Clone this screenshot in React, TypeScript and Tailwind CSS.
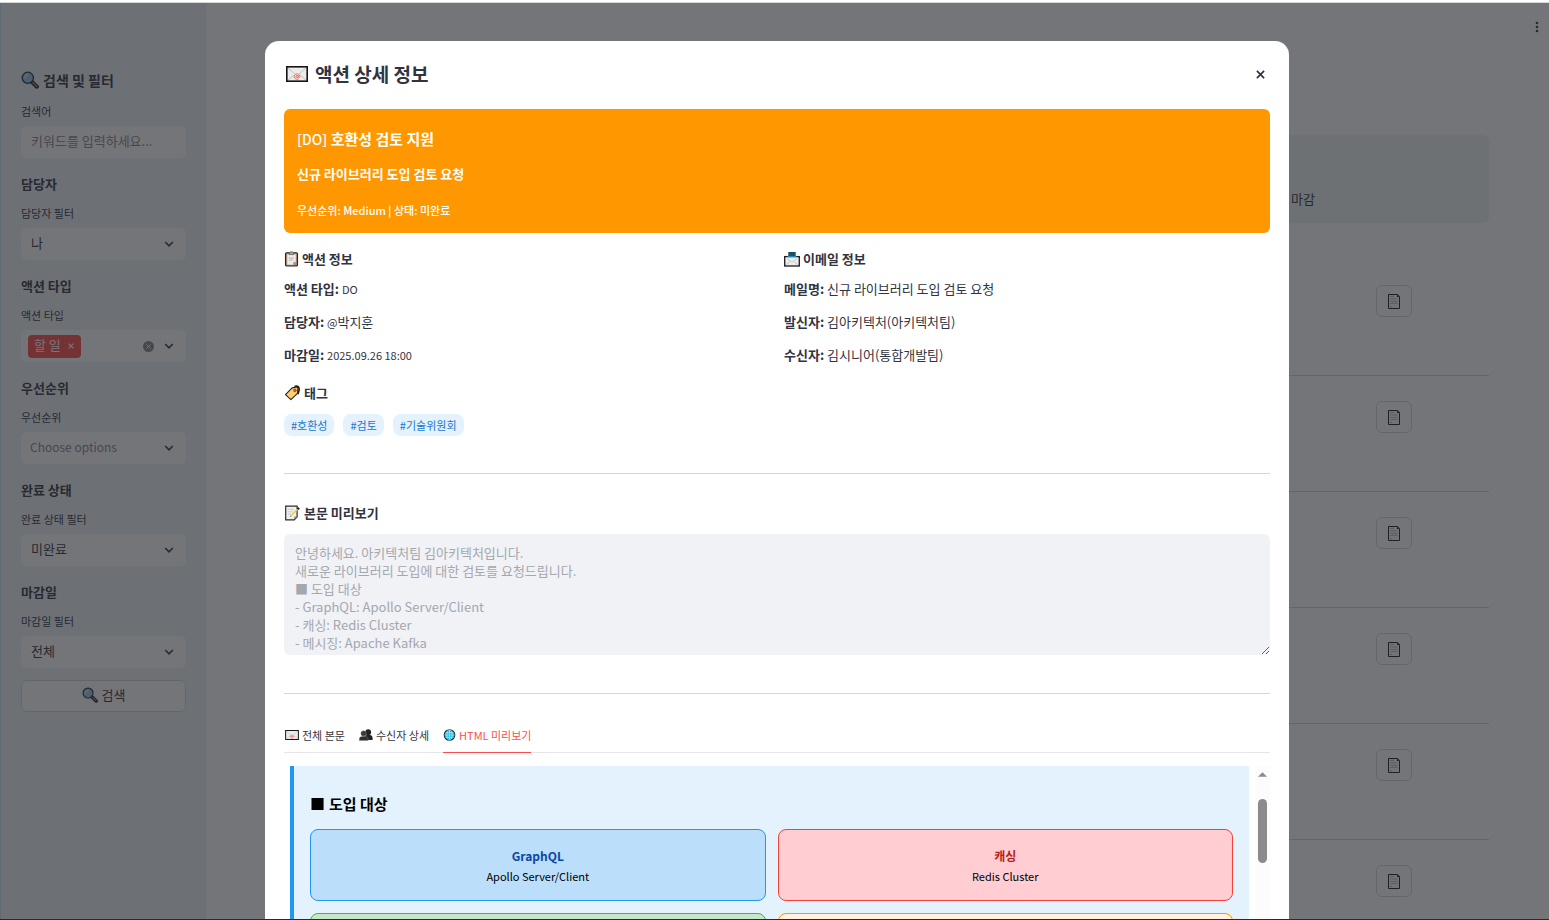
import React from "react";
import type { ReactNode } from "react";

type IconProps = { className?: string };

const SearchIcon = ({ className }: IconProps) => (
  <svg viewBox="0 0 18 18" className={className} aria-hidden="true">
    <path d="M10.5 10.5l5.4 5.2" stroke="#1d2024" strokeWidth="4" strokeLinecap="round" />
    <path d="M11.8 11.6l4 3.9" stroke="#7b8288" strokeWidth="1.6" strokeLinecap="round" />
    <circle cx="6.8" cy="6.8" r="5.6" fill="#8fc6ea" stroke="#26292e" strokeWidth="1.3" />
    <path d="M3.8 7.2a3.4 3.4 0 0 1 3.4-3.4" stroke="#d6efff" strokeWidth="1.3" fill="none" />
  </svg>
);

const MailIcon = ({ className }: IconProps) => (
  <svg viewBox="0 0 22 16" className={className} aria-hidden="true">
    <rect x="0.8" y="0.8" width="20.4" height="14.4" fill="#ececec" stroke="#151515" strokeWidth="1.6" />
    <path d="M2 2l7 6M20 2l-7 6M2 14l6-5M20 14l-6-5" stroke="#b5b5b5" strokeWidth="0.8" fill="none" />
    <path d="M12.9 12.7a2.8 2.8 0 1 1 .9-2.2c0 1.4-1.5 1.5-1.5.2V9.4" stroke="#e8664e" strokeWidth="0.9" fill="none" />
    <circle cx="11" cy="10.5" r="1.2" stroke="#e8664e" strokeWidth="0.8" fill="#f8c5b9" />
  </svg>
);

const ClipboardIcon = ({ className }: IconProps) => (
  <svg viewBox="0 0 14 16" className={className} aria-hidden="true">
    <rect x="1" y="1.8" width="12" height="13.2" rx="1" fill="#a98a72" stroke="#2b2521" strokeWidth="1.1" />
    <path d="M2.7 3.2h8.6V11l-2.6 2.8h-6z" fill="#ececec" />
    <path d="M11.3 11H8.7v2.8z" fill="#9b9b9b" />
    <path d="M4.4 7h5M4.4 9h4" stroke="#a5a5a5" strokeWidth="0.8" />
    <path d="M4.6 3.6V2L6 .8h2L9.4 2v1.6z" fill="#9da1a5" stroke="#4a4a4a" strokeWidth="0.6" />
  </svg>
);

const OutboxIcon = ({ className }: IconProps) => (
  <svg viewBox="0 0 16 16" className={className} aria-hidden="true">
    <path d="M4.4 6.5V1h7.2v5.5z" fill="#101c24" />
    <path d="M6 1v4M8 1v4M10 1v4" stroke="#1ea7d6" strokeWidth="0.8" />
    <rect x="0.7" y="5.6" width="14.6" height="9.4" fill="#ededed" stroke="#1b1b1b" strokeWidth="1.3" />
    <path d="M2 13.8l4.4-3.6M14 13.8l-4.4-3.6M3 7.6l5 3.6 5-3.6" stroke="#c2c2c2" strokeWidth="0.8" fill="none" />
    <path d="M3.5 5.4h9" stroke="#1ea7d6" strokeWidth="0.9" />
  </svg>
);

const TagIcon = ({ className }: IconProps) => (
  <svg viewBox="0 0 16 16" className={className} aria-hidden="true">
    <path d="M10 1.6c3.2-1.4 5 .6 4.5 3.6-.2 1.6-.7 3-1.4 4" stroke="#2c1a12" strokeWidth="1.7" fill="none" />
    <path d="M1 9.7L7.6 2.9l4.9-.9 1 1.3-.5 5-6.6 6.3z" fill="#fbcf72" stroke="#2a211a" strokeWidth="1.1" strokeLinejoin="round" />
    <circle cx="10.4" cy="5.4" r="1.4" fill="#d9661f" stroke="#7a2c10" strokeWidth="0.6" />
  </svg>
);

const MemoIcon = ({ className }: IconProps) => (
  <svg viewBox="0 0 16 16" className={className} aria-hidden="true">
    <path d="M1.2 1.2h11.4v10.6l-2.8 3H1.2z" fill="#f0f0f0" stroke="#2b2b2b" strokeWidth="1.2" />
    <path d="M12.6 11.4H9.6v3.4z" fill="#8d8d8d" />
    <path d="M3.2 4.4h6M3.2 6.8h5M3.2 9.2h3.4" stroke="#c4c4c4" strokeWidth="0.9" />
    <path d="M6.2 11L13.2 4" stroke="#f6c851" strokeWidth="1.7" />
    <path d="M12.8 2.8l2 1.4" stroke="#22201e" strokeWidth="1.9" />
    <path d="M5.2 12.2l.6-1.8 1.2 1.2z" fill="#a08a5d" />
  </svg>
);

const PeopleIcon = ({ className }: IconProps) => (
  <svg viewBox="0 0 14 12" className={className} aria-hidden="true">
    <circle cx="9.2" cy="3.2" r="2.9" fill="#222" />
    <path d="M5.6 11V8.4c0-1.7 1.5-2.6 3.6-2.6 2.8 0 4.4 1.2 4.4 3.2v2z" fill="#222" />
    <circle cx="4.6" cy="4.4" r="2.7" fill="#3a3a3a" stroke="#8a8a8a" strokeWidth="0.4" />
    <path d="M.3 11.6V9.8c0-1.8 1.7-2.6 4.2-2.6s4.6.8 4.6 2.6v1.8z" fill="#2d2d2d" stroke="#8a8a8a" strokeWidth="0.4" />
  </svg>
);

const GlobeIcon = ({ className }: IconProps) => (
  <svg viewBox="0 0 12 12" className={className} aria-hidden="true">
    <circle cx="6" cy="6" r="5.3" fill="#27bdea" stroke="#12333f" strokeWidth="1.1" />
    <path d="M6 1v10M1 6h10M2 3.6h8M2 8.4h8" stroke="#b5ecfb" strokeWidth="0.6" />
    <ellipse cx="6" cy="6" rx="2.6" ry="5" stroke="#b5ecfb" strokeWidth="0.6" fill="none" />
  </svg>
);

const PageIcon = ({ className }: IconProps) => (
  <svg viewBox="0 0 12 15" className={className} aria-hidden="true">
    <path d="M.5.5h9l2 2v12H.5z" fill="#fafafa" stroke="#1a1a1a" strokeWidth="1" />
    <path d="M9 .7v2.4h2.4z" fill="#111" />
    <path d="M2 2.5h4M2.4 5h7M2.4 7.5h7M2.4 9.5h7M2 12.5h2" stroke="#bdbdbd" strokeWidth="1" />
  </svg>
);

const Chevron = ({ className }: IconProps) => (
  <svg viewBox="0 0 10 6" className={className} fill="none" stroke="currentColor" strokeWidth="1.6" aria-hidden="true">
    <path d="M1.2 1l3.8 3.8L8.8 1" />
  </svg>
);

const Cross = ({ className }: IconProps) => (
  <svg viewBox="0 0 10 10" className={className} fill="none" stroke="currentColor" strokeWidth="1.9" aria-hidden="true">
    <path d="M1 1l8 8M9 1L1 9" />
  </svg>
);

const Latin = ({ children }: { children: ReactNode }) => <span className="text-[11px]">{children}</span>;

function FilterGroup({ id, title, label, children }: { id: string; title: string; label: string; children: ReactNode }) {
  return (
    <section className="mt-4">
      <h3 className="text-[13px] leading-5 font-bold">{title}</h3>
      <label htmlFor={id} className="mt-[9px] mb-[5px] block text-[11px] leading-5 text-[#31333f]">
        {label}
      </label>
      {children}
    </section>
  );
}

function SelectBox({ id, value, muted }: { id: string; value: string; muted?: boolean }) {
  return (
    <div className="relative">
      <select
        id={id}
        className={
          muted
            ? "h-8 w-full appearance-none rounded-md bg-white pr-8 pb-[3px] pl-[9px] text-xs text-[#85868c]"
            : "h-8 w-full appearance-none rounded-md bg-white pr-8 pb-[3px] pl-[10px] text-[13px]"
        }
      >
        <option>{value}</option>
      </select>
      <Chevron className="pointer-events-none absolute top-[13px] right-3 h-1.5 w-2.5" />
    </div>
  );
}

function Sidebar() {
  return (
    <aside className="w-[205px] shrink-0 bg-[#ebf5fa] px-5 pt-[65px]">
      <h2 className="flex items-center gap-1 text-sm leading-6 font-bold">
        <SearchIcon className="h-[18px] w-[18px]" />
        검색 및 필터
      </h2>
      <label htmlFor="keyword" className="mt-[9px] mb-[5px] block text-[11px] leading-5">
        검색어
      </label>
      <input
        id="keyword"
        placeholder="키워드를 입력하세요..."
        className="block h-8 w-full rounded-md bg-white px-[10px] pb-[3px] text-[13px] placeholder:text-[#85868c]"
      />
      <FilterGroup id="owner" title="담당자" label="담당자 필터">
        <SelectBox id="owner" value="나" />
      </FilterGroup>
      <FilterGroup id="type" title="액션 타입" label="액션 타입">
        <div className="flex h-8 items-center rounded-md bg-white pr-3 pl-[7px]">
          <button id="type" className="flex h-[23px] w-[53px] items-center justify-between rounded-sm bg-[#ff4b4b] pr-[7px] pl-1.5 text-[13px] text-white">
            <span className="pb-[3px]">할 일</span>
            <Cross className="h-1.5 w-1.5" />
          </button>
          <button aria-label="선택 지우기" className="ml-auto flex h-[11px] w-[11px] items-center justify-center rounded-full bg-[#85868c] text-white">
            <Cross className="h-[5px] w-[5px]" />
          </button>
          <Chevron className="ml-2.5 h-1.5 w-2.5" />
        </div>
      </FilterGroup>
      <FilterGroup id="priority" title="우선순위" label="우선순위">
        <SelectBox id="priority" value="Choose options" muted />
      </FilterGroup>
      <FilterGroup id="status" title="완료 상태" label="완료 상태 필터">
        <SelectBox id="status" value="미완료" />
      </FilterGroup>
      <FilterGroup id="due" title="마감일" label="마감일 필터">
        <SelectBox id="due" value="전체" />
      </FilterGroup>
      <button className="mt-3 flex h-8 w-full items-center justify-center gap-1 rounded-md border border-[#d6d6d8] bg-white pb-[3px] text-[13px]">
        <SearchIcon className="h-4 w-4" />
        검색
      </button>
    </aside>
  );
}

function ActionList() {
  return (
    <main className="relative min-w-0 flex-1 bg-white px-[60px] pt-[132px]">
      <button aria-label="메뉴" className="absolute top-[18px] right-[9px] flex h-3 w-1.5 justify-center">
        <svg viewBox="0 0 4 12" className="h-3 w-1" fill="currentColor" aria-hidden="true">
          <circle cx="2" cy="2" r="1.3" />
          <circle cx="2" cy="6" r="1.3" />
          <circle cx="2" cy="10" r="1.3" />
        </svg>
      </button>
      <div className="flex h-[88px] justify-end rounded-md bg-[#ebf5f4] pt-[54px] text-[13px] leading-5">
        <p className="w-[198px]">마감</p>
      </div>
      <ul className="mt-[37px]">
        {[1, 2, 3, 4, 5, 6].map((n) => (
          <li key={n} className="flex h-[116px] items-start justify-end border-b border-[#d6d6d8] pt-[25px] pr-[77px]">
            <button aria-label="상세 보기" className="flex h-8 w-9 items-center justify-center rounded-md border border-[#d6d6d8]">
              <PageIcon className="h-[15px] w-3" />
            </button>
          </li>
        ))}
      </ul>
    </main>
  );
}

function Row({ name, children }: { name: string; children: ReactNode }) {
  return (
    <p>
      <strong className="font-bold">{name}:</strong> {children}
    </p>
  );
}

function SectionTitle({ icon, children }: { icon: ReactNode; children: ReactNode }) {
  return (
    <h3 className="flex items-center gap-[3px] text-[13px] leading-5 font-bold">
      {icon}
      {children}
    </h3>
  );
}

function Tag({ children }: { children: ReactNode }) {
  return <li className="rounded-lg bg-[#e3f2fd] px-[7px] text-[11px] leading-[22px] text-[#1976d2]">{children}</li>;
}

const message = `안녕하세요. 아키텍처팀 김아키텍처입니다.
새로운 라이브러리 도입에 대한 검토를 요청드립니다.
■ 도입 대상
- GraphQL: Apollo Server/Client
- 캐싱: Redis Cluster
- 메시징: Apache Kafka`;

function HtmlPreview() {
  return (
    <div className="mt-[13px] flex h-[320px] overflow-hidden pl-1.5 text-black">
      <div className="h-[400px] flex-1 border-l-4 border-[#2196f3] bg-[#e3f2fd] px-4 pt-[26px]">
        <h4 className="flex gap-1 text-[15px] leading-6 font-bold">
          <span>■</span>도입 대상
        </h4>
        <div className="mt-[13px] grid grid-cols-2 gap-3 text-center text-[11px] leading-5">
          <div className="h-[72px] rounded-lg border border-[#2196f3] bg-[#bbdefb] pt-4">
            <p className="text-xs leading-5 font-bold text-[#0d47a1]">GraphQL</p>
            <p>Apollo Server/Client</p>
          </div>
          <div className="h-[72px] rounded-lg border border-[#f44336] bg-[#ffcdd2] pt-4">
            <p className="text-xs leading-5 font-bold text-[#b71c1c]">캐싱</p>
            <p>Redis Cluster</p>
          </div>
          <div className="h-[72px] rounded-lg border border-[#4caf50] bg-[#c8e6c9]" />
          <div className="h-[72px] rounded-lg border border-[#ff9800] bg-[#fff3e0]" />
        </div>
      </div>
      <div className="ml-1.5 flex w-[15px] flex-col items-center bg-[#fcfcfc] pt-1.5">
        <svg viewBox="0 0 10 5" className="h-[5px] w-[9px]" aria-hidden="true">
          <path d="M5 0l5 5H0z" fill="#8b8b8b" />
        </svg>
        <div className="mt-[22px] h-16 w-[9px] rounded-full bg-[#8b8b8b]" />
      </div>
    </div>
  );
}

function DetailDialog() {
  return (
    <div role="dialog" aria-labelledby="dialog-title" className="w-full max-w-[1024px] shrink-0 rounded-[14px] bg-white px-[19px] pt-[19px]">
      <header className="flex items-center justify-between pr-[5px] pl-0.5">
        <h2 id="dialog-title" className="flex items-center gap-[7px] text-[19px] leading-7 font-bold">
          <MailIcon className="h-4 w-[22px]" />
          액션 상세 정보
        </h2>
        <button aria-label="닫기">
          <Cross className="h-[9px] w-[9px]" />
        </button>
      </header>

      <section className="mt-[21px] rounded-md bg-[#ff9800] px-[13px] pt-[18px] pb-[13px] text-white">
        <h3 className="text-[15px] leading-6 font-bold">
          <span className="text-sm leading-6 font-medium">[DO]</span> 호환성 검토 지원
        </h3>
        <p className="mt-[13px] text-[13px] leading-5 font-bold">신규 라이브러리 도입 검토 요청</p>
        <p className="mt-4 text-[11px] leading-5 font-medium">우선순위: Medium | 상태: 미완료</p>
      </section>

      <div className="mt-4 grid grid-cols-2 gap-3.5 text-[13px] leading-5">
        <section className="flex flex-col gap-[13px]">
          <div className="-mb-[3px]">
            <SectionTitle icon={<ClipboardIcon className="h-4 w-[15px]" />}>액션 정보</SectionTitle>
          </div>
          <Row name="액션 타입">
            <Latin>DO</Latin>
          </Row>
          <Row name="담당자">
            <Latin>@</Latin>박지훈
          </Row>
          <Row name="마감일">
            <Latin>2025.09.26 18:00</Latin>
          </Row>
        </section>
        <section className="flex flex-col gap-[13px]">
          <div className="-mb-[3px]">
            <SectionTitle icon={<OutboxIcon className="h-4 w-4" />}>이메일 정보</SectionTitle>
          </div>
          <Row name="메일명">신규 라이브러리 도입 검토 요청</Row>
          <Row name="발신자">김아키텍처(아키텍처팀)</Row>
          <Row name="수신자">김시니어(통합개발팀)</Row>
        </section>
      </div>

      <section className="mt-[18px]">
        <SectionTitle icon={<TagIcon className="h-4 w-[17px]" />}>태그</SectionTitle>
        <ul className="mt-[11px] flex gap-[9px]">
          <Tag>#호환성</Tag>
          <Tag>#검토</Tag>
          <Tag>#기술위원회</Tag>
        </ul>
      </section>

      <hr className="mt-[37px] border-[#d6d6d9]" />

      <section className="mt-[29px]">
        <SectionTitle icon={<MemoIcon className="h-4 w-[17px]" />}>
          <label htmlFor="preview">본문 미리보기</label>
        </SectionTitle>
        <textarea
          id="preview"
          disabled
          defaultValue={message}
          className="mt-[11px] block h-[121px] w-full resize-y overflow-hidden rounded-md bg-[#f0f2f6] px-[11px] pt-2.5 text-[13px] leading-[18px] text-[#a5a7ae]"
        />
      </section>

      <hr className="mt-[38px] border-[#d6d6d9]" />

      <div role="tablist" className="mt-[31px] flex gap-3.5 border-b border-[#e6e6e9] text-[11px] leading-5">
        <button role="tab" className="flex items-center gap-[3px] pb-[7px] pl-px">
          <MailIcon className="h-2.5 w-3.5" />
          전체 본문
        </button>
        <button role="tab" className="flex items-center gap-[3px] pb-[7px]">
          <PeopleIcon className="h-3 w-3.5" />
          수신자 상세
        </button>
        <button role="tab" aria-selected="true" className="-mb-px flex items-center gap-[3px] border-b border-[#ff4b4b] pb-[7px] text-[#ff4b4b]">
          <GlobeIcon className="h-3 w-[13px]" />
          HTML 미리보기
        </button>
      </div>
      <HtmlPreview />
    </div>
  );
}

export default function App() {
  return (
    <div className="flex h-screen flex-col overflow-hidden font-['Noto_Sans_CJK_KR',sans-serif] text-[#31333f]">
      <div className="h-[3px] shrink-0 border-b border-[#d5d8d5] bg-white" />
      <div className="relative flex min-h-0 flex-1 overflow-hidden border-l border-[#5c6a72]">
        <Sidebar />
        <ActionList />
        <div className="absolute inset-0 flex items-start justify-center overflow-hidden bg-[#232429]/63 pt-[38px] pl-1">
          <DetailDialog />
        </div>
      </div>
      <div className="h-px shrink-0 bg-[#2e2630]" />
    </div>
  );
}
